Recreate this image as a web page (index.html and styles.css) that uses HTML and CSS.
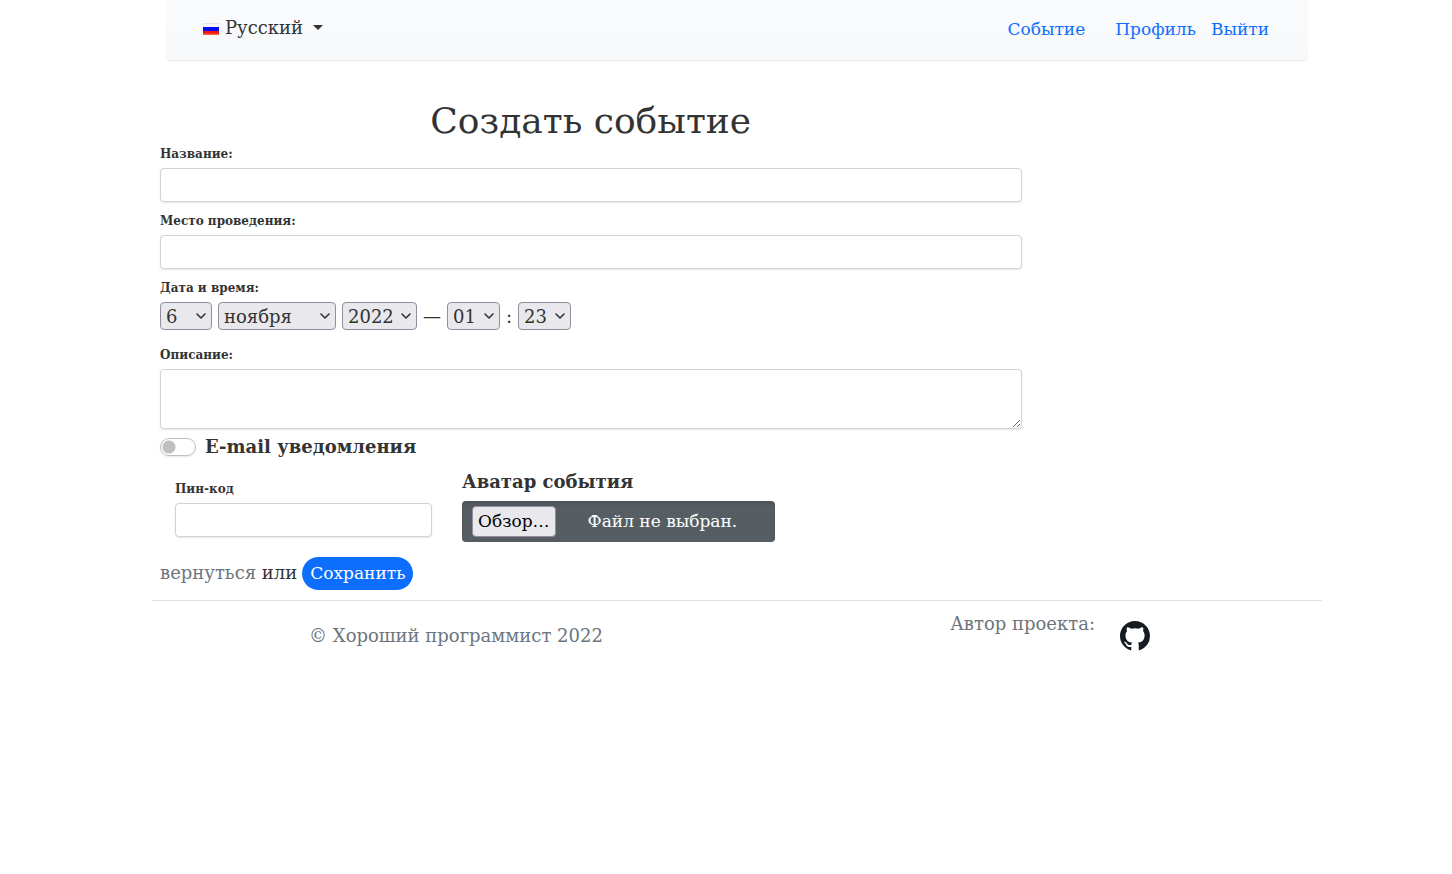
FILE: index.html
```html
<!DOCTYPE html>
<html lang="ru">
<head>
<meta charset="utf-8">
<meta name="viewport" content="width=device-width, initial-scale=1">
<title>Создать событие</title>
<link rel="stylesheet" href="styles.css">
</head>
<body>
<div class="container">
  <header class="navbar">
    <button class="lang" type="button">
      <svg class="flag" viewBox="0 0 16 12" aria-hidden="true">
        <path fill="#f4f4f4" d="M0 0h16v5H0z"/>
        <path fill="#d8d8d8" d="M0 0h16v.6H0z"/>
        <path fill="#0a0af5" d="M0 4h16v4.500H0z"/>
        <path fill="#f01414" d="M0 8h16v4H0z"/>
        <path fill="#ff5a32" d="M0 10.500h16V12H0z"/>
      </svg>
      <span>Русский</span>
      <span class="caret"></span>
    </button>
    <nav class="links">
      <a class="link-event" href="#">Событие</a>
      <a href="#">Профиль</a>
      <a href="#">Выйти</a>
    </nav>
  </header>

  <main>
    <form class="event-form">
      <h1>Создать событие</h1>

      <label class="label" for="title">Название:</label>
      <input class="control" id="title" type="text">

      <label class="label" for="address">Место проведения:</label>
      <input class="control" id="address" type="text">

      <label class="label" for="day">Дата и время:</label>
      <div class="datetime">
        <select class="select day" id="day"><option>6</option></select>
        <select class="select month" aria-label="Месяц"><option>ноября</option></select>
        <select class="select year" aria-label="Год"><option>2022</option></select>
        <span>—</span>
        <select class="select time" aria-label="Часы"><option>01</option></select>
        <span>:</span>
        <select class="select time" aria-label="Минуты"><option>23</option></select>
      </div>

      <label class="label" for="description">Описание:</label>
      <textarea class="control area" id="description"></textarea>

      <div class="switch-row">
        <input class="switch" id="notify" type="checkbox" role="switch">
        <label for="notify">E-mail уведомления</label>
      </div>

      <div class="extras">
        <div class="pin">
          <label class="label" for="pin">Пин-код</label>
          <input class="control" id="pin" type="text">
        </div>
        <div class="avatar">
          <label class="avatar-title" for="avatar">Аватар события</label>
          <div class="file">
            <span class="file-button">Обзор…</span>
            <span class="file-name">Файл не выбран.</span>
            <input class="file-input" id="avatar" type="file">
          </div>
        </div>
      </div>

      <div class="actions">
        <span class="back-text"><a class="back" href="#">вернуться</a> или</span>
        <button class="save" type="submit">Сохранить</button>
      </div>
    </form>
  </main>

  <footer class="footer">
    <p class="copy">© Хороший программист 2022</p>
    <div class="author">
      <span>Автор проекта:</span>
      <a class="github" href="#" aria-label="GitHub">
        <svg viewBox="0 0 16 16" aria-hidden="true"><path fill="#161b22" d="M8 0C3.580 0 0 3.580 0 8c0 3.540 2.290 6.530 5.470 7.590.4.070.55-.17.55-.38 0-.19-.01-.82-.01-1.490-2.010.37-2.530-.49-2.690-.94-.09-.23-.48-.94-.82-1.130-.28-.15-.68-.52-.01-.53.63-.01 1.080.58 1.230.82.72 1.210 1.870.87 2.330.66.07-.52.28-.87.51-1.070-1.780-.2-3.640-.89-3.640-3.950 0-.87.31-1.590.82-2.150-.08-.2-.36-1.020.08-2.120 0 0 .67-.21 2.200.82.64-.18 1.320-.27 2-.27s1.360.09 2 .27c1.530-1.040 2.200-.82 2.200-.82.44 1.100.16 1.920.08 2.120.51.56.82 1.270.82 2.150 0 3.070-1.870 3.750-3.650 3.950.29.25.54.73.54 1.480 0 1.070-.01 1.930-.01 2.200 0 .21.15.46.55.38A8.010 8.010 0 0 0 16 8c0-4.420-3.580-8-8-8z"/></svg>
      </a>
    </div>
  </footer>
</div>
</body>
</html>
```

FILE: styles.css
```css
*, *::before, *::after { box-sizing: border-box; }

body {
  margin: 0;
  padding-left: 22px;
  background: #fff;
  color: #333;
  font-family: "DejaVu Serif", serif;
  font-size: 18px;
  line-height: 27px;
}

a { color: #0d6efd; text-decoration: none; }
input, select, textarea, button { font: inherit; color: inherit; }

.container { max-width: 1170px; margin: 0 auto; }

.navbar {
  display: flex;
  justify-content: space-between;
  align-items: flex-start;
  height: 60px;
  margin: 0 15px;
  padding: 14px 38px 0 36px;
  background: linear-gradient(#f9fbfc, #f7f8fa);
  border-radius: 0 0 4px 4px;
  box-shadow: 0 1px 2px rgba(0, 0, 0, .1);
}

.lang {
  display: flex;
  align-items: center;
  gap: 6px;
  padding: 0;
  border: 0;
  background: none;
}
.flag { width: 16px; height: 12px; margin-top: 2px; }
.caret {
  margin-left: 4px;
  margin-bottom: 1px;
  border: 5px solid transparent;
  border-top-color: #333;
  border-bottom: 0;
}

.links { display: flex; gap: 15px; font-size: 17px; padding-top: 2px; }
.link-event { margin-right: 15px; }

.event-form {
  display: flex;
  flex-direction: column;
  width: 75%;
  padding: 38px 8px 0;
}

h1 {
  margin: 0;
  font-size: 36px;
  font-weight: 400;
  line-height: 45px;
  text-align: center;
}

.label {
  display: block;
  margin-bottom: 3px;
  font-size: 12px;
  font-weight: 700;
  line-height: 22px;
}

.control {
  display: block;
  width: 100%;
  height: 34px;
  margin-bottom: 8px;
  padding: 4px 8px;
  border: 1px solid #ced4da;
  border-radius: 4px;
  background: #fff;
  box-shadow: 0 1px 2px rgba(0, 0, 0, .1);
}
.area { height: 60px; margin-bottom: 4px; resize: vertical; }

.datetime { display: flex; align-items: center; gap: 6px; height: 28px; margin-bottom: 14px; }

.select {
  height: 28px;
  padding: 0 5px 1px;
  border: 1px solid #8f8f9d;
  border-radius: 4px;
  appearance: none;
  background: #e9e9ed url("data:image/svg+xml,%3Csvg xmlns='http://www.w3.org/2000/svg' viewBox='0 0 10 6'%3E%3Cpath fill='none' stroke='%23333' stroke-width='1.600' stroke-linecap='round' stroke-linejoin='round' d='M1 1l4 4 4-4'/%3E%3C/svg%3E") no-repeat right 5px center / 10px 6px;
}
.day { width: 52px; }
.month { width: 118px; }
.year { width: 75px; }
.time { width: 53px; }

.switch-row { display: flex; align-items: center; gap: 9px; font-weight: 700; }
.switch {
  width: 36px;
  height: 18px;
  margin: 0;
  appearance: none;
  border: 1px solid #bfbfbf;
  border-radius: 9px;
  background: radial-gradient(circle, #bfbfbf 6px, transparent 7px) no-repeat 0 center / 16px 16px;
  box-shadow: 0 1px 2px rgba(0, 0, 0, .1);
}
.switch:checked { background-position: right center; }

.extras { display: flex; gap: 30px; padding: 8px 15px 0; }
.pin { width: 257px; padding-top: 10px; }
.avatar { width: 313px; }
.avatar-title { display: block; margin-bottom: 6px; font-weight: 700; }

.file {
  position: relative;
  display: flex;
  align-items: center;
  gap: 32px;
  height: 41px;
  padding: 0 10px;
  border-radius: 4px;
  background: #565e64;
  box-shadow: inset 0 3px 5px rgba(0, 0, 0, .12);
  color: #fff;
  font-size: 17px;
}
.file-button {
  padding: 1px 5px;
  border: 1px solid #8f8f9d;
  border-radius: 4px;
  background: #e9e9ed;
  color: #000;
}
.file-input { position: absolute; inset: 0; width: 100%; opacity: 0; }

.actions { display: flex; align-items: center; gap: 5px; margin: 12px 0 10px; }
.back-text { padding-bottom: 3px; }
.back, .footer { color: #6c757d; }
.save {
  height: 33px;
  padding: 0 8px;
  border: 0;
  border-radius: 17px;
  background: #0d6efd;
  color: #fff;
  font-size: 17px;
}

.footer { display: flex; border-top: 1px solid #dee2e6; }
.copy { width: 50%; margin: 0; padding: 21px 27px 0 50px; text-align: center; }
.author {
  display: flex;
  flex: 1;
  justify-content: flex-end;
  gap: 25px;
  padding: 9px 172px 0 0;
}
.github { padding-top: 11px; }
.github svg { display: block; width: 30px; height: 30px; }
```
